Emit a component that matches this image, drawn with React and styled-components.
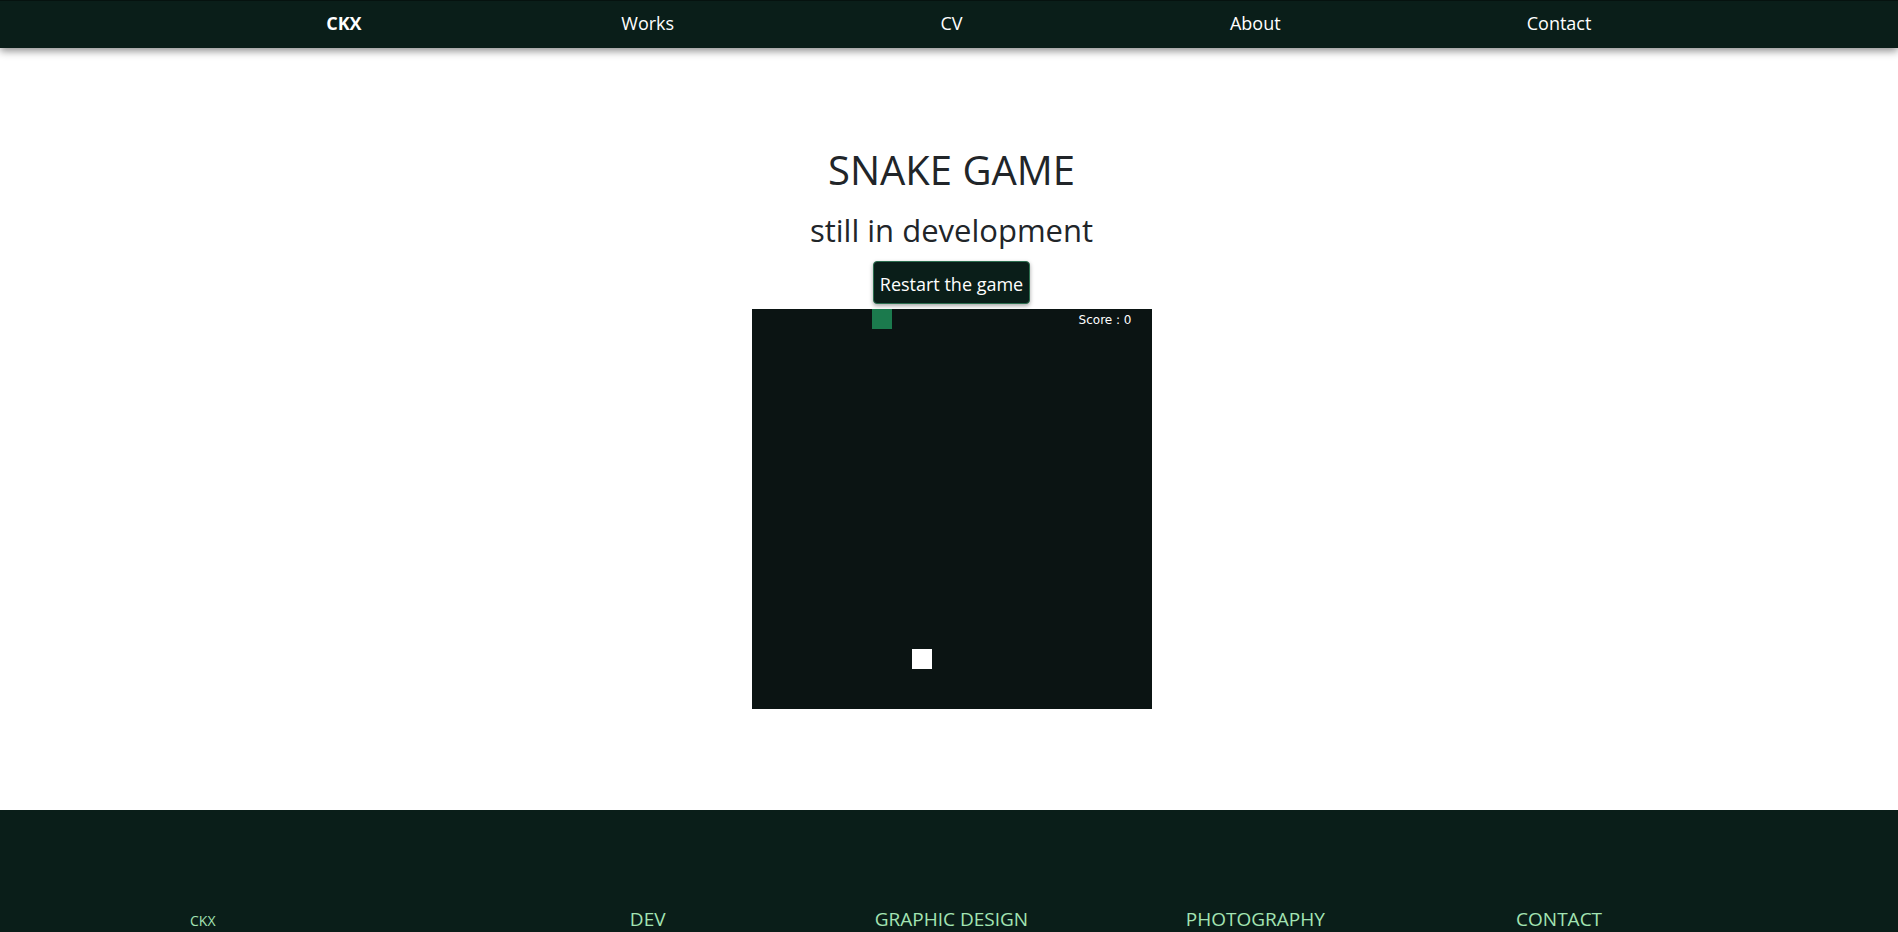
import React from "react";
import styled, { createGlobalStyle } from "styled-components";

const nav_links = ["Works", "CV", "About", "Contact"];
const footer_heads = ["DEV", "GRAPHIC DESIGN", "PHOTOGRAPHY", "CONTACT"];

const CELL = 20;
const snake = [{ x: 6, y: 0 }];
const food = { x: 8, y: 17 };

const GlobalStyle = createGlobalStyle`
  * { box-sizing: border-box; }
  body {
    margin: 0;
    font-family: "Open Sans", "Noto Sans", sans-serif;
    color: #212529;
    background: #fff;
  }
`;

const App = () => {
  return (
    <>
      <GlobalStyle />
      <NavBar>
        <Columns>
          <NavItem $brand>CKX</NavItem>
          {nav_links.map((l) => (
            <NavItem key={l}>{l}</NavItem>
          ))}
        </Columns>
      </NavBar>
      <Main>
        <Title>SNAKE GAME</Title>
        <SubTitle>still in development</SubTitle>
        <RestartButton>Restart the game</RestartButton>
        <Board>
          {snake.map((s, i) => (
            <Cell key={i} $color="#1b7a4d" style={{ left: s.x * CELL, top: s.y * CELL }} />
          ))}
          <Cell $color="#ffffff" style={{ left: food.x * CELL, top: food.y * CELL }} />
          <Score>Score : 0</Score>
        </Board>
      </Main>
      <Footer>
        <Columns>
          <FooterBrand>CKX</FooterBrand>
          {footer_heads.map((h) => (
            <FooterHead key={h}>{h}</FooterHead>
          ))}
        </Columns>
      </Footer>
    </>
  );
};

const NavBar = styled.nav`
  height: 48px;
  padding-bottom: 3px;
  background: #0a1e19;
  border-top: 1px solid #06120f;
  box-shadow: 0 3px 8px rgba(0, 0, 0, 0.45);
  display: flex;
  align-items: center;
`;

const Columns = styled.div`
  width: 1519px;
  margin-left: calc(50% - 757px);
  display: grid;
  grid-template-columns: repeat(5, 1fr);
  align-items: baseline;
`;

const NavItem = styled.a`
  text-align: center;
  color: #fff;
  font-size: 18px;
  font-weight: ${(p) => (p.$brand ? 700 : 400)};
  cursor: pointer;
`;

const Main = styled.main`
  display: flex;
  flex-direction: column;
  align-items: center;
  padding: 98px 0 0 5px;
`;

const Title = styled.h1`
  margin: 0 0 18px;
  font-size: 40px;
  font-weight: 400;
  line-height: 1.2;
`;

const SubTitle = styled.h2`
  margin: 0 0 12px;
  font-size: 31px;
  font-weight: 400;
  line-height: 1.2;
`;

const RestartButton = styled.button`
  height: 43px;
  padding: 2px 6px 0;
  font-family: inherit;
  font-size: 18px;
  color: #fff;
  background: #0a1e19;
  border: 1px solid #2b6e4f;
  border-radius: 4px;
  box-shadow: 0 2px 4px rgba(0, 0, 0, 0.35);
  cursor: pointer;
`;

const Board = styled.div`
  position: relative;
  width: 400px;
  height: 400px;
  margin-top: 5px;
  background: #0b1413;
`;

const Cell = styled.div`
  position: absolute;
  width: ${CELL}px;
  height: ${CELL}px;
  background: ${(p) => p.$color};
`;

const Score = styled.span`
  position: absolute;
  top: 4px;
  right: 20px;
  font-family: "DejaVu Sans", Verdana, sans-serif;
  font-size: 12px;
  color: #fff;
`;

const Footer = styled.footer`
  margin-top: 101px;
  padding: 96px 0 120px;
  background: #0a1e19;
`;

const FooterHead = styled.div`
  text-align: center;
  font-size: 19px;
  color: #a3e4b3;
`;

const FooterBrand = styled.div`
  font-size: 14px;
  color: #a3e4b3;
  margin-left: -2px;
`;

export default App;
